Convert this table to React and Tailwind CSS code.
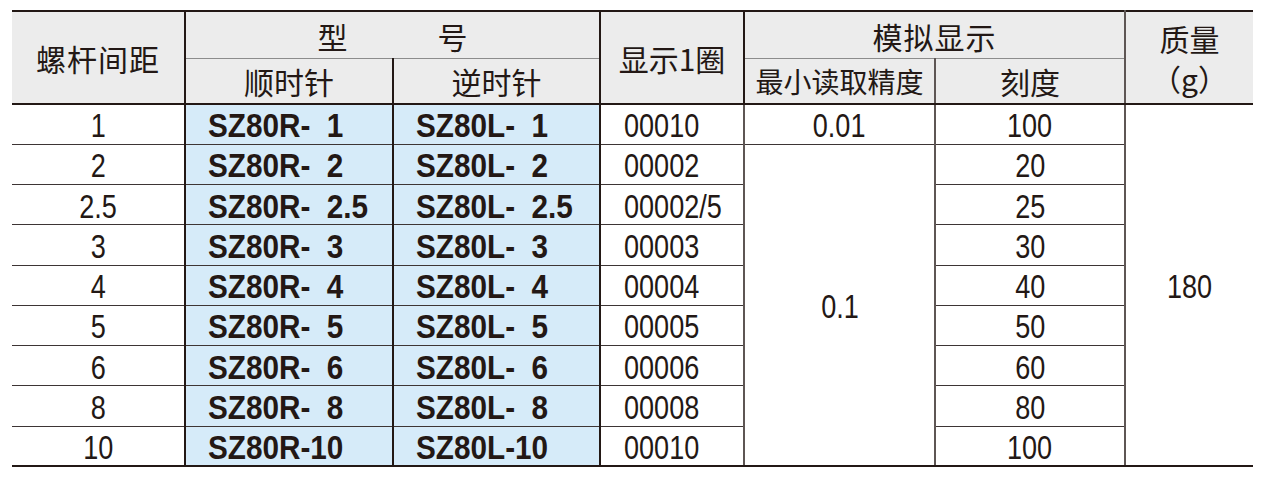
import React from "react";

const rows = [
  ["1", "SZ80R-  1", "SZ80L-  1", "00010", "100"],
  ["2", "SZ80R-  2", "SZ80L-  2", "00002", "20"],
  ["2.5", "SZ80R-  2.5", "SZ80L-  2.5", "00002/5", "25"],
  ["3", "SZ80R-  3", "SZ80L-  3", "00003", "30"],
  ["4", "SZ80R-  4", "SZ80L-  4", "00004", "40"],
  ["5", "SZ80R-  5", "SZ80L-  5", "00005", "50"],
  ["6", "SZ80R-  6", "SZ80L-  6", "00006", "60"],
  ["8", "SZ80R-  8", "SZ80L-  8", "00008", "80"],
  ["10", "SZ80R-10", "SZ80L-10", "00010", "100"],
];

function Num({ children, left }) {
  return (
    <span
      className={
        left
          ? "inline-block whitespace-pre scale-x-[0.82] origin-left"
          : "inline-block whitespace-pre scale-x-[0.82] origin-center"
      }
    >
      {children}
    </span>
  );
}

function Bold({ children }) {
  return (
    <span className="inline-block whitespace-pre font-bold scale-x-[0.9] origin-left">
      {children}
    </span>
  );
}

const cjk = "font-['Noto_Sans_CJK_SC',sans-serif]";

export default function App() {
  const last = rows.length - 1;
  return (
    <div className="w-[1271px] h-[478px] bg-white pl-[12px] pt-[10px] text-[#231815]">
      <table className="w-[1241px] table-fixed border-collapse">
        <colgroup>
          <col className="w-[173px]" />
          <col className="w-[208px]" />
          <col className="w-[207px]" />
          <col className="w-[144px]" />
          <col className="w-[191px]" />
          <col className="w-[190px]" />
          <col className="w-[128px]" />
        </colgroup>
        <thead className={`${cjk} font-normal text-[30px] leading-[40px]`}>
          <tr className="h-[47px] bg-[#ececec]">
            <th
              rowSpan={2}
              className="font-normal border-t-2 border-b-2 border-r-2 border-[#231815] tracking-[1px]"
            >
              螺杆间距
            </th>
            <th
              colSpan={2}
              className="font-normal border-t-2 border-r-2 border-t-[#231815] border-r-[#231815] border-b border-b-[#8c8c8c] pt-[2px]"
            >
              型　　　号
            </th>
            <th
              rowSpan={2}
              className="font-normal border-t-2 border-b-2 border-r-2 border-[#231815]"
            >
              显示1圈
            </th>
            <th
              colSpan={2}
              className="font-normal border-t-2 border-r-2 border-t-[#231815] border-r-[#5e5654] border-b border-b-[#8c8c8c] tracking-[1px] pt-[2px]"
            >
              模拟显示
            </th>
            <th
              rowSpan={2}
              className="font-normal border-t-2 border-b-2 border-[#231815] leading-[40px]"
            >
              质量
              <br />
              （g）
            </th>
          </tr>
          <tr className="h-[46px] bg-[#ececec]">
            <th className="font-normal border-b-2 border-r-2 border-[#231815]">
              顺时针
            </th>
            <th className="font-normal border-b-2 border-r-2 border-[#231815]">
              逆时针
            </th>
            <th className="font-normal border-b-2 border-r-2 border-b-[#231815] border-r-[#5e5654] text-[28px]">
              最小读取精度
            </th>
            <th className="font-normal border-b-2 border-r-2 border-b-[#231815] border-r-[#5e5654]">
              刻度
            </th>
          </tr>
        </thead>
        <tbody className="font-['Liberation_Sans',Arial,sans-serif] text-[33px] leading-none">
          {rows.map((r, i) => {
            const bb =
              i === last
                ? "border-b-2 border-b-[#231815]"
                : "border-b border-b-[#3d3535]";
            return (
              <tr key={i} className="h-[40.25px]">
                <td className={`${bb} border-r-2 border-r-[#231815] text-center pt-[3px]`}>
                  <Num>{r[0]}</Num>
                </td>
                <td className={`${bb} border-r-2 border-r-[#231815] bg-[#d6ebf9] pl-[22px] pt-[3px]`}>
                  <Bold>{r[1]}</Bold>
                </td>
                <td className={`${bb} border-r-2 border-r-[#231815] bg-[#d6ebf9] pl-[22px] pt-[3px]`}>
                  <Bold>{r[2]}</Bold>
                </td>
                <td className={`${bb} border-r-2 border-r-[#5e5654] pl-[23px] pt-[3px]`}>
                  <Num left>{r[3]}</Num>
                </td>
                {i === 0 && (
                  <td className="border-b border-b-[#3d3535] border-r-2 border-r-[#5e5654] text-center pt-[3px]">
                    <Num>0.01</Num>
                  </td>
                )}
                {i === 1 && (
                  <td
                    rowSpan={8}
                    className="border-b-2 border-b-[#231815] border-r-2 border-r-[#5e5654] text-center pt-[3px]"
                  >
                    <Num>0.1</Num>
                  </td>
                )}
                <td className={`${bb} border-r-2 border-r-[#5e5654] text-center pt-[3px]`}>
                  <Num>{r[4]}</Num>
                </td>
                {i === 0 && (
                  <td
                    rowSpan={9}
                    className="border-b-2 border-b-[#231815] text-center pt-[3px]"
                  >
                    <Num>180</Num>
                  </td>
                )}
              </tr>
            );
          })}
        </tbody>
      </table>
    </div>
  );
}
